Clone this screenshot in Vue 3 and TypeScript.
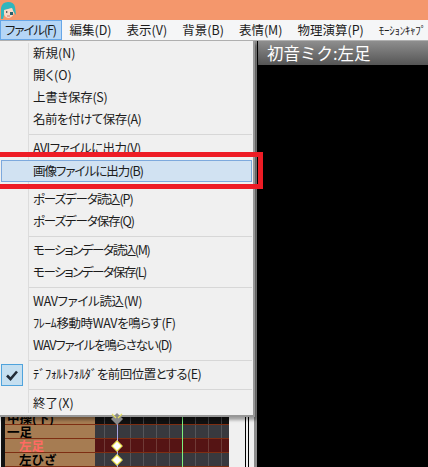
<script setup lang="ts">
const menuBar = ['編集(D)', '表示(V)', '背景(B)', '表情(M)', '物理演算(P)'];
const rows: { label?: string; kind?: string; ls?: number }[] = [
  { label: '新規(N)' },
  { label: '開く(O)' },
  { label: '上書き保存(S)', ls: -0.3 },
  { label: '名前を付けて保存(A)', ls: -0.5 },
  {},
  { label: 'AVIファイルに出力(V)', ls: -0.5 },
  { label: '画像ファイルに出力(B)', kind: 'sel', ls: -1 },
  {},
  { label: 'ポーズデータ読込(P)', ls: -1.1 },
  { label: 'ポーズデータ保存(Q)', ls: -1.1 },
  {},
  { label: 'モーションデータ読込(M)', ls: -1.4 },
  { label: 'モーションデータ保存(L)', ls: -1.4 },
  {},
  { label: 'WAVファイル読込(W)', ls: -0.35 },
  { label: 'ﾌﾚｰﾑ移動時WAVを鳴らす(F)', ls: -0.4 },
  { label: 'WAVファイルを鳴らさない(D)', ls: -1.1 },
  {},
  { label: 'ﾃﾞﾌｫﾙﾄﾌｫﾙﾀﾞを前回位置とする(E)', kind: 'check', ls: -0.55 },
  {},
  { label: '終了(X)' },
];
const tracks = [
  { name: '中操(下)', cls: 'top', indent: 2 },
  { name: '一足', cls: '', indent: 2 },
  { name: '左足', cls: 'active', indent: 14, key: true },
  { name: '左ひざ', cls: '', indent: 14, key: true },
];
</script>

<template>
  <div class="page">
    <header class="titlebar">
      <svg class="logo" width="17" height="19" viewBox="0 0 17 19">
        <path d="M1 18 L1 7 Q2 1 8 1 Q14 1 15 6 L16 14 L13 10 L12 7 L5 9 L4 14 L3 18 Z" fill="#2fb6bd" />
        <path d="M4 9 L12 7 L14 12 Q13 16 9 17 Q5 17 4 13 Z" fill="#f6d9c8" />
        <path d="M6 10 L8 11 L6 12 Z" fill="#3a3a3a" />
        <rect x="10" y="11" width="3" height="3" fill="#27626e" />
        <path d="M7 15 L10 15" stroke="#c9746a" stroke-width="1" />
      </svg>
    </header>

    <nav class="menubar">
      <span class="mi active">ファイル(F)</span>
      <span v-for="m in menuBar" :key="m" class="mi">{{ m }}</span>
      <span class="mi narrow">ﾓｰｼｮﾝｷｬﾌﾟ</span>
    </nav>

    <main class="body">
      <section class="left">
        <div class="timeline">
          <div class="gutter"></div>
          <div class="tracks">
            <div v-for="t in tracks" :key="t.name" class="track" :class="t.cls">
              <div class="name" :style="{ paddingLeft: t.indent + 'px' }">{{ t.name }}</div>
              <div class="frames">
                <span v-if="t.key" class="key"></span>
                <svg v-if="t.cls === 'top'" class="xkey" width="14" height="14" viewBox="0 0 14 14">
                  <path d="M7 2 L13 8 L7 14 L1 8 Z" fill="#8a8a8a" />
                  <path d="M2 3 L6 7 M12 3 L8 7" stroke="#e5e060" stroke-width="1.2" />
                </svg>
              </div>
            </div>
            <i class="purple"></i>
            <i class="green"></i>
          </div>
          <div class="side">
            <b></b><b></b>
          </div>
        </div>
      </section>
      <div class="splitter"></div>
      <section class="view">
        <div class="viewtitle">初音ミク:左足</div>
      </section>
    </main>

    <div class="menu">
      <template v-for="(r, i) in rows" :key="i">
        <div v-if="!r.label" class="sep"></div>
        <div v-else class="row" :class="r.kind">
          <span v-if="r.kind === 'check'" class="checkbox">
            <svg width="14" height="12" viewBox="0 0 14 12">
              <path d="M2 6.5 L5.5 10 L12 2.5" fill="none" stroke="#222c38" stroke-width="2.6" />
            </svg>
          </span>
          <span class="label" :style="{ letterSpacing: (r.ls ?? 0) + 'px' }">{{ r.label }}</span>
        </div>
      </template>
    </div>
    <div class="redbox"></div>
  </div>
</template>

<style>
html, body { margin: 0; background: #000; overflow: hidden; }
</style>

<style scoped>
.page {
  position: relative;
  width: 428px;
  height: 467px;
  overflow: hidden;
  display: flex;
  flex-direction: column;
  font-family: "Noto Sans CJK JP", "Noto Sans", sans-serif;
  font-size: 12.5px;
  font-feature-settings: "palt";
  color: #1c1c1c;
}
.titlebar {
  height: 20px;
  background: #f4976c;
  flex: none;
  display: flex;
  align-items: flex-start;
}
.logo { margin-top: 1px; }
.menubar {
  height: 21px;
  flex: none;
  background: #f5f6f7;
  display: flex;
  box-sizing: border-box;
  border-bottom: 1px solid #b0b0b0;
  overflow: hidden;
}
.mi {
  flex: none;
  padding: 0 7.5px;
  line-height: 20px;
  white-space: nowrap;
  box-sizing: border-box;
}
.mi.active {
  width: 62px;
  padding: 0 0 0 5px;
  background: #b5d6f6;
  outline: 1px solid #66a7e8;
  outline-offset: -1px;
  letter-spacing: -1.1px;
}
.mi.narrow { font-size: 11px; letter-spacing: -0.3px; }
.body {
  flex: 1;
  display: flex;
  min-height: 0;
}
.left {
  width: 254px;
  flex: none;
  background: #f0f0f0;
  display: flex;
  flex-direction: column;
  justify-content: flex-end;
}
.timeline {
  height: 56px;
  display: flex;
}
.gutter {
  width: 5px;
  flex: none;
  background: linear-gradient(to right, #f0f0f0 0 1px, #111 1px);
}
.tracks {
  position: relative;
  width: 224px;
  flex: none;
}
.track {
  height: 14px;
  display: flex;
  box-sizing: border-box;
  border-bottom: 1px solid #7e2e12;
}
.name {
  width: 90px;
  flex: none;
  box-sizing: border-box;
  background: #a67c52;
  color: #000;
  font-size: 12.5px;
  font-weight: 700;
  line-height: 13px;
  white-space: nowrap;
  font-feature-settings: normal;
}
.track.active .name { color: #ff6a62; }
.frames {
  position: relative;
  flex: 1;
  background-color: #38393e;
  background-image: repeating-linear-gradient(to right, transparent 0 9px, #55565a 9px 10px, transparent 10px 13px);
}
.track.active .frames {
  background-color: #551414;
  background-image: repeating-linear-gradient(to right, transparent 0 9px, #6f3a36 9px 10px, transparent 10px 13px);
}
.track.top .frames {
  background-color: #111;
  background-image: repeating-linear-gradient(to right, transparent 0 9px, #3f3f42 9px 10px, transparent 10px 13px);
}
.key {
  position: absolute;
  left: 18px;
  top: 3px;
  width: 8px;
  height: 8px;
  transform: rotate(45deg);
  background: #fff;
  border: 1px solid #e9e23a;
  box-sizing: border-box;
  z-index: 2;
}
.xkey { position: absolute; left: 15px; top: 0; z-index: 2; }
.purple {
  position: absolute;
  left: 112px;
  top: 0;
  width: 1px;
  height: 100%;
  background: #a8a2e0;
}
.green {
  position: absolute;
  left: 177px;
  top: 0;
  width: 1px;
  height: 100%;
  background: #7cf07c;
}
.side {
  flex: 1;
  background: #f0f0f0;
  display: flex;
  padding-left: 16px;
  gap: 2px;
}
.side b {
  display: block;
  width: 1px;
  background: #000;
}
.splitter {
  width: 3px;
  flex: none;
  background: #8c8c8c;
}
.view {
  flex: 1;
  background: #000;
}
.viewtitle {
  height: 24px;
  background: linear-gradient(to bottom, #8e8e8e, #555);
  color: #fff;
  font-size: 16.5px;
  line-height: 24px;
  padding-left: 9px;
  margin-left: 1px;
  font-feature-settings: normal;
}
.menu {
  position: absolute;
  left: -2px;
  top: 41px;
  width: 257px;
  height: 376px;
  box-sizing: border-box;
  padding-top: 2px;
  background: #f0f0f0;
  border: 1px solid #979797;
  border-width: 0 2px 2px 0;
  box-shadow: 2px 3px 3px rgba(0, 0, 0, 0.35);
}
.menu::before {
  content: "";
  position: absolute;
  left: 30px;
  top: 2px;
  bottom: 2px;
  width: 1px;
  background: #dcdcdc;
}
.row {
  position: relative;
  height: 22px;
  line-height: 20px;
  padding-left: 35px;
  white-space: nowrap;
  box-sizing: border-box;
}
.row.sel {
  margin-left: 3px;
  padding-left: 31px;
  margin-right: 1px;
  background: #d1e2f2;
  border: 1px solid #7da9dd;
  line-height: 19px;
}
.label { position: relative; }
.checkbox {
  position: absolute;
  left: 3px;
  top: 0;
  width: 22px;
  height: 22px;
  box-sizing: border-box;
  background: #c5dff0;
  border: 1px solid #4fa3dc;
  display: flex;
  align-items: center;
  justify-content: center;
}
.sep {
  height: 7px;
  position: relative;
}
.sep::after {
  content: "";
  position: absolute;
  left: 31px;
  right: 1px;
  top: 3px;
  height: 1px;
  background: #d7d7d7;
}
.redbox {
  position: absolute;
  left: -6px;
  top: 152px;
  width: 269px;
  height: 37px;
  box-sizing: border-box;
  border: 5px solid #ee1c25;
}
</style>
